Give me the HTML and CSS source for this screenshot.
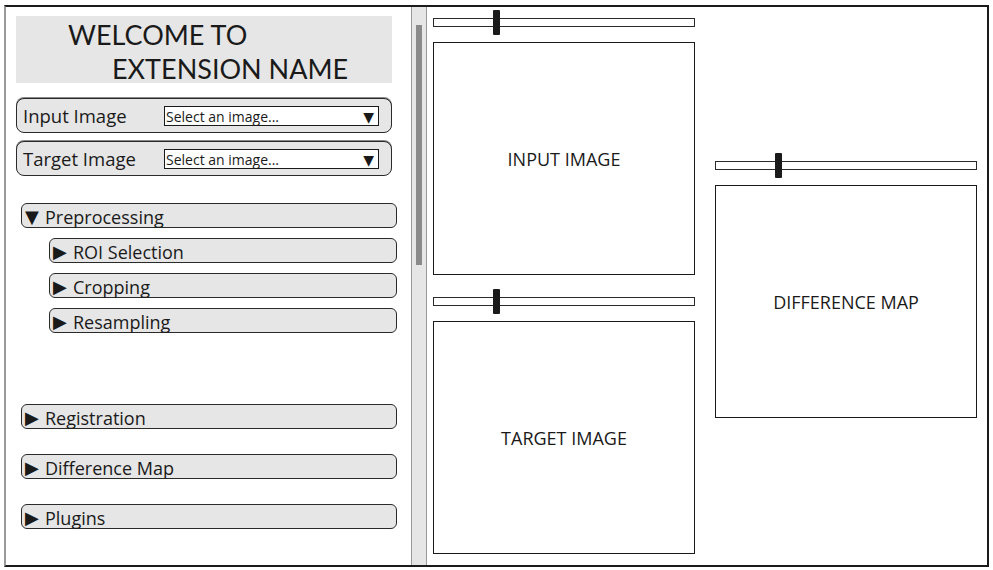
FILE: index.html
```html
<!DOCTYPE html>
<html lang="en">
<head>
    <meta charset="UTF-8">
    <title>Extension</title>
    <link rel="stylesheet" href="styles.css">
</head>
<body>
    <div class="frame">
        <div class="sidebar">
            <div class="welcome">
                <p class="welcome-line">WELCOME TO</p>
                <p class="welcome-line indent">EXTENSION NAME</p>
            </div>

            <div class="picker first">
                <span class="picker-label">Input Image</span>
                <div class="select">Select an image...<span class="arrow">▼</span></div>
            </div>
            <div class="picker">
                <span class="picker-label">Target Image</span>
                <div class="select">Select an image...<span class="arrow">▼</span></div>
            </div>

            <div class="section open"><span class="caret">▼</span>Preprocessing</div>
            <div class="section sub"><span class="caret">▶</span>ROI Selection</div>
            <div class="section sub"><span class="caret">▶</span>Cropping</div>
            <div class="section sub"><span class="caret">▶</span>Resampling</div>

            <div class="section gap-big"><span class="caret">▶</span>Registration</div>
            <div class="section gap"><span class="caret">▶</span>Difference Map</div>
            <div class="section gap"><span class="caret">▶</span>Plugins</div>
        </div>

        <div class="scrollbar">
            <div class="thumb"></div>
        </div>

        <div class="viewer">
            <div class="column">
                <div class="slider"><div class="knob"></div></div>
                <div class="image-box">INPUT IMAGE</div>
                <div class="slider second"><div class="knob"></div></div>
                <div class="image-box">TARGET IMAGE</div>
            </div>
            <div class="column diff">
                <div class="slider"><div class="knob"></div></div>
                <div class="image-box">DIFFERENCE MAP</div>
            </div>
        </div>
    </div>
</body>
</html>
```

FILE: styles.css
```css
* {
    margin: 0;
    padding: 0;
    box-sizing: border-box;
}

body {
    font-family: 'Open Sans', 'Noto Sans', sans-serif;
    background: #fff;
    color: #1a1a1a;
    width: 993px;
    height: 570px;
    overflow: hidden;
}

.frame {
    margin: 5px 0 0 4px;
    width: 985px;
    height: 562px;
    border: 2px solid #1a1a1a;
    border-left: 2px solid #9a9a9a;
    display: flex;
}

/* left panel */
.sidebar {
    width: 405px;
    padding: 9px 0 0 10px;
}

.welcome {
    width: 376px;
    height: 67px;
    background: #e6e6e6;
    padding: 2px 0 0 52px;
    font-family: 'Lato', sans-serif;
    font-size: 27px;
    line-height: 34px;
    color: #1a1a1a;
}

.welcome-line.indent {
    padding-left: 44px;
}

.picker {
    width: 376px;
    height: 35px;
    margin-top: 8px;
    background: #e6e6e6;
    border: 1px solid #2a2a2a;
    border-radius: 8px;
    display: flex;
    align-items: center;
    padding: 0 12px 0 6px;
    box-shadow: 0 -1px 0 #888;
}

.picker.first {
    margin-top: 15px;
}

.picker-label {
    font-size: 18.5px;
    width: 141px;
}

.select {
    flex: 1;
    height: 20px;
    background: #fff;
    border: 1px solid #1a1a1a;
    font-size: 14px;
    line-height: 20px;
    padding-left: 1px;
    display: flex;
    justify-content: space-between;
}

.arrow {
    font-size: 14px;
    padding-right: 4px;
    font-family: 'DejaVu Sans', sans-serif;
}

.section {
    width: 376px;
    height: 25px;
    margin: 10px 0 0 5px;
    background: #e6e6e6;
    border: 1px solid #2a2a2a;
    border-radius: 6px;
    font-size: 18px;
    line-height: 26px;
    padding-left: 3px;
    white-space: nowrap;
    display: flex;
}

.caret {
    font-family: 'DejaVu Sans', sans-serif;
    font-size: 18px;
    width: 20px;
}

.section.open {
    margin-top: 27px;
}

.section.sub {
    width: 348px;
    margin-left: 33px;
}

.section.gap-big {
    margin-top: 71px;
}

.section.gap {
    margin-top: 25px;
}

/* scrollbar between panels */
.scrollbar {
    width: 16px;
    background: #e6e6e6;
    border-left: 1px solid #9a9a9a;
    border-right: 1px solid #9a9a9a;
    padding: 18px 0 0 4px;
}

.thumb {
    width: 6px;
    height: 240px;
    background: #8a8a8a;
}

/* right area */
.viewer {
    flex: 1;
    display: flex;
    gap: 20px;
    padding: 3px 0 0 6px;
}

.column {
    width: 262px;
    display: flex;
    flex-direction: column;
}

.column.diff {
    padding-top: 143px;
}

.slider {
    position: relative;
    height: 9px;
    margin-top: 8px;
    border: 1.5px solid #2a2a2a;
    background: #fff;
}

.slider.second {
    margin-top: 22px;
}

.knob {
    position: absolute;
    left: 59px;
    top: -9px;
    width: 7px;
    height: 25px;
    background: #1a1a1a;
    border-radius: 1px;
}

.image-box {
    height: 233px;
    margin-top: 15px;
    border: 1.5px solid #1a1a1a;
    display: flex;
    align-items: center;
    justify-content: center;
    font-size: 18px;
}
```
